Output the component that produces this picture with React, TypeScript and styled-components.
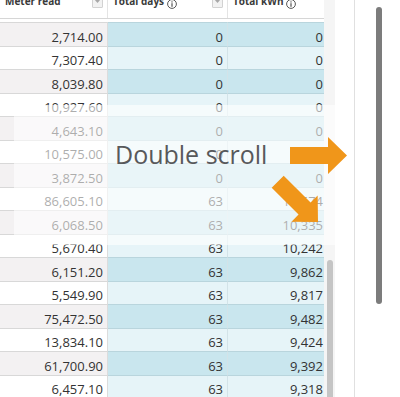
import React from "react";
import styled, { createGlobalStyle } from "styled-components";

const GlobalStyle = createGlobalStyle`
  html, body { margin: 0; padding: 0; background: #ffffff; overflow: hidden; }
  body { font-family: "Open Sans", "Noto Sans", sans-serif; color: #333333; }
`;

const Page = styled.div`
  position: relative;
  display: flex;
  width: 400px;
  height: 397px;
  overflow: hidden;
  background: #ffffff;
`;

const Panel = styled.div`
  display: flex;
  width: 355px;
  height: 100%;
  box-sizing: border-box;
  padding-right: 19px;
  border-right: 1px solid #e0e0e0;
  flex-shrink: 0;
`;

const GridArea = styled.div`
  display: flex;
  width: 335px;
  height: 100%;
`;

const Table = styled.div`
  width: 324px;
  display: flex;
  flex-direction: column;
  overflow: hidden;
`;

const HeaderRow = styled.div`
  display: grid;
  grid-template-columns: 108px 120px 96px;
  height: 19px;
  box-sizing: border-box;
  border-bottom: 1px solid #d6d6d6;
  flex-shrink: 0;
`;

const HeaderCell = styled.div<{ $last?: boolean }>`
  display: flex;
  align-items: flex-end;
  justify-content: space-between;
  box-sizing: border-box;
  padding: 0 ${(p) => (p.$last ? 0 : 4)}px 10.9px 5px;
  overflow: hidden;
  border-right: ${(p) => (p.$last ? "none" : "1px solid #e4e4e4")};
`;

const HeaderLabel = styled.span`
  display: flex;
  align-items: flex-end;
  gap: 3px;
  font-size: 10px;
  line-height: 12px;
  font-weight: 700;
  color: #3a3a3a;
  white-space: nowrap;
`;

const FilterBox = styled.span`
  display: flex;
  align-items: center;
  justify-content: center;
  width: 11px;
  height: 11px;
  box-sizing: border-box;
  margin-bottom: -1px;
  border: 1px solid #d2d2d2;
  border-radius: 1px;
  background: #f2f2f2;
`;

const Spacer = styled.div`
  height: 3px;
  flex-shrink: 0;
`;

const Row = styled.div`
  display: grid;
  grid-template-columns: 108px 120px 96px;
  height: 23.5px;
  flex-shrink: 0;
`;

const Cell = styled.div<{ $blue?: boolean; $odd?: boolean; $last?: boolean }>`
  display: flex;
  align-items: flex-end;
  justify-content: flex-end;
  box-sizing: border-box;
  padding: 0 ${(p) => (p.$last ? 1 : 4)}px 1px 4px;
  font-size: 13px;
  line-height: 16px;
  color: #333333;
  white-space: nowrap;
  overflow: hidden;
  background: ${(p) =>
    p.$blue ? (p.$odd ? "#c9e6ee" : "#e6f4f8") : p.$odd ? "#f3f1f2" : "#ffffff"};
  border-top: 1px solid ${(p) => (p.$blue ? "#b9d5dd" : "#d8d8d8")};
  border-right: ${(p) =>
    p.$last ? "none" : p.$blue ? "1px solid #d3e3e8" : "1px solid #dcdcdc"};
`;

const InnerTrack = styled.div`
  width: 11px;
  height: 100%;
  box-sizing: border-box;
  padding: 260px 2px 0 3px;
  background: #f5f5f5;
  display: flex;
  flex-shrink: 0;
`;

const InnerThumb = styled.div`
  width: 6px;
  flex: 1;
  background: #c5c5c5;
  border-radius: 3px 3px 0 0;
`;

const OuterRail = styled.div`
  flex: 1;
  height: 100%;
  box-sizing: border-box;
  padding: 7px 0 93px 21px;
  display: flex;
`;

const OuterThumb = styled.div`
  width: 6px;
  height: 100%;
  background: #7c7c7c;
  border-radius: 3px;
`;

const Overlay = styled.div`
  position: absolute;
  left: 14px;
  top: 105px;
  width: 326px;
  height: 140px;
  box-sizing: border-box;
  padding: 37px 0 0 101px;
  background: rgba(255, 255, 255, 0.6);
  font-family: "Open Sans", "Noto Sans", sans-serif;
  font-size: 25px;
  line-height: 25px;
  color: #58595b;
  white-space: nowrap;
`;

const ArrowLayer = styled.svg`
  position: absolute;
  left: 0;
  top: 0;
  pointer-events: none;
`;

const InfoIcon = () => (
  <svg width="10" height="10" viewBox="0 0 10 10" style={{ marginBottom: -2 }}>
    <circle cx="5" cy="5" r="4.4" fill="none" stroke="#444" strokeWidth="0.9" />
    <circle cx="5" cy="2.9" r="0.7" fill="#444" />
    <rect x="4.45" y="4.2" width="1.1" height="3.6" fill="#444" />
  </svg>
);

const FilterIcon = () => (
  <FilterBox>
    <svg width="7" height="5" viewBox="0 0 7 5" style={{ marginTop: -3 }}>
      <polygon points="0.5,0.5 6.5,0.5 3.5,4" fill="#a8a8a8" />
    </svg>
  </FilterBox>
);

const rows: [string, string, string][] = [
  ["2,714.00", "0", "0"],
  ["7,307.40", "0", "0"],
  ["8,039.80", "0", "0"],
  ["10,927.60", "0", "0"],
  ["4,643.10", "0", "0"],
  ["10,575.00", "0", "0"],
  ["3,872.50", "0", "0"],
  ["86,605.10", "63", "10,574"],
  ["6,068.50", "63", "10,335"],
  ["5,670.40", "63", "10,242"],
  ["6,151.20", "63", "9,862"],
  ["5,549.90", "63", "9,817"],
  ["75,472.50", "63", "9,482"],
  ["13,834.10", "63", "9,424"],
  ["61,700.90", "63", "9,392"],
  ["6,457.10", "63", "9,318"],
];

const ORANGE = "#f0961a";

export default function App() {
  return (
    <>
      <GlobalStyle />
      <Page>
        <Panel>
          <GridArea>
            <Table>
              <HeaderRow>
                <HeaderCell>
                  <HeaderLabel>Meter read</HeaderLabel>
                  <FilterIcon />
                </HeaderCell>
                <HeaderCell>
                  <HeaderLabel>
                    Total days <InfoIcon />
                  </HeaderLabel>
                  <FilterIcon />
                </HeaderCell>
                <HeaderCell $last>
                  <HeaderLabel>
                    Total kWh <InfoIcon />
                  </HeaderLabel>
                </HeaderCell>
              </HeaderRow>
              <Spacer />
              {rows.map(([meter, days, kwh], i) => {
                const odd = i % 2 === 0;
                return (
                  <Row key={i}>
                    <Cell $odd={odd}>{meter}</Cell>
                    <Cell $blue $odd={odd}>
                      {days}
                    </Cell>
                    <Cell $blue $odd={odd} $last>
                      {kwh}
                    </Cell>
                  </Row>
                );
              })}
            </Table>
            <InnerTrack>
              <InnerThumb />
            </InnerTrack>
          </GridArea>
        </Panel>
        <OuterRail>
          <OuterThumb />
        </OuterRail>
        <Overlay>Double scroll</Overlay>
        <ArrowLayer width="400" height="397" viewBox="0 0 400 397">
          <polygon
            points="290,147 328,147 328,137 347,155.5 328,174 328,164 290,164"
            fill={ORANGE}
          />
          <polygon
            transform="rotate(45 318 222)"
            points="261,213.5 299,213.5 299,203.5 318,222 299,240.5 299,230.5 261,230.5"
            fill={ORANGE}
          />
        </ArrowLayer>
      </Page>
    </>
  );
}
